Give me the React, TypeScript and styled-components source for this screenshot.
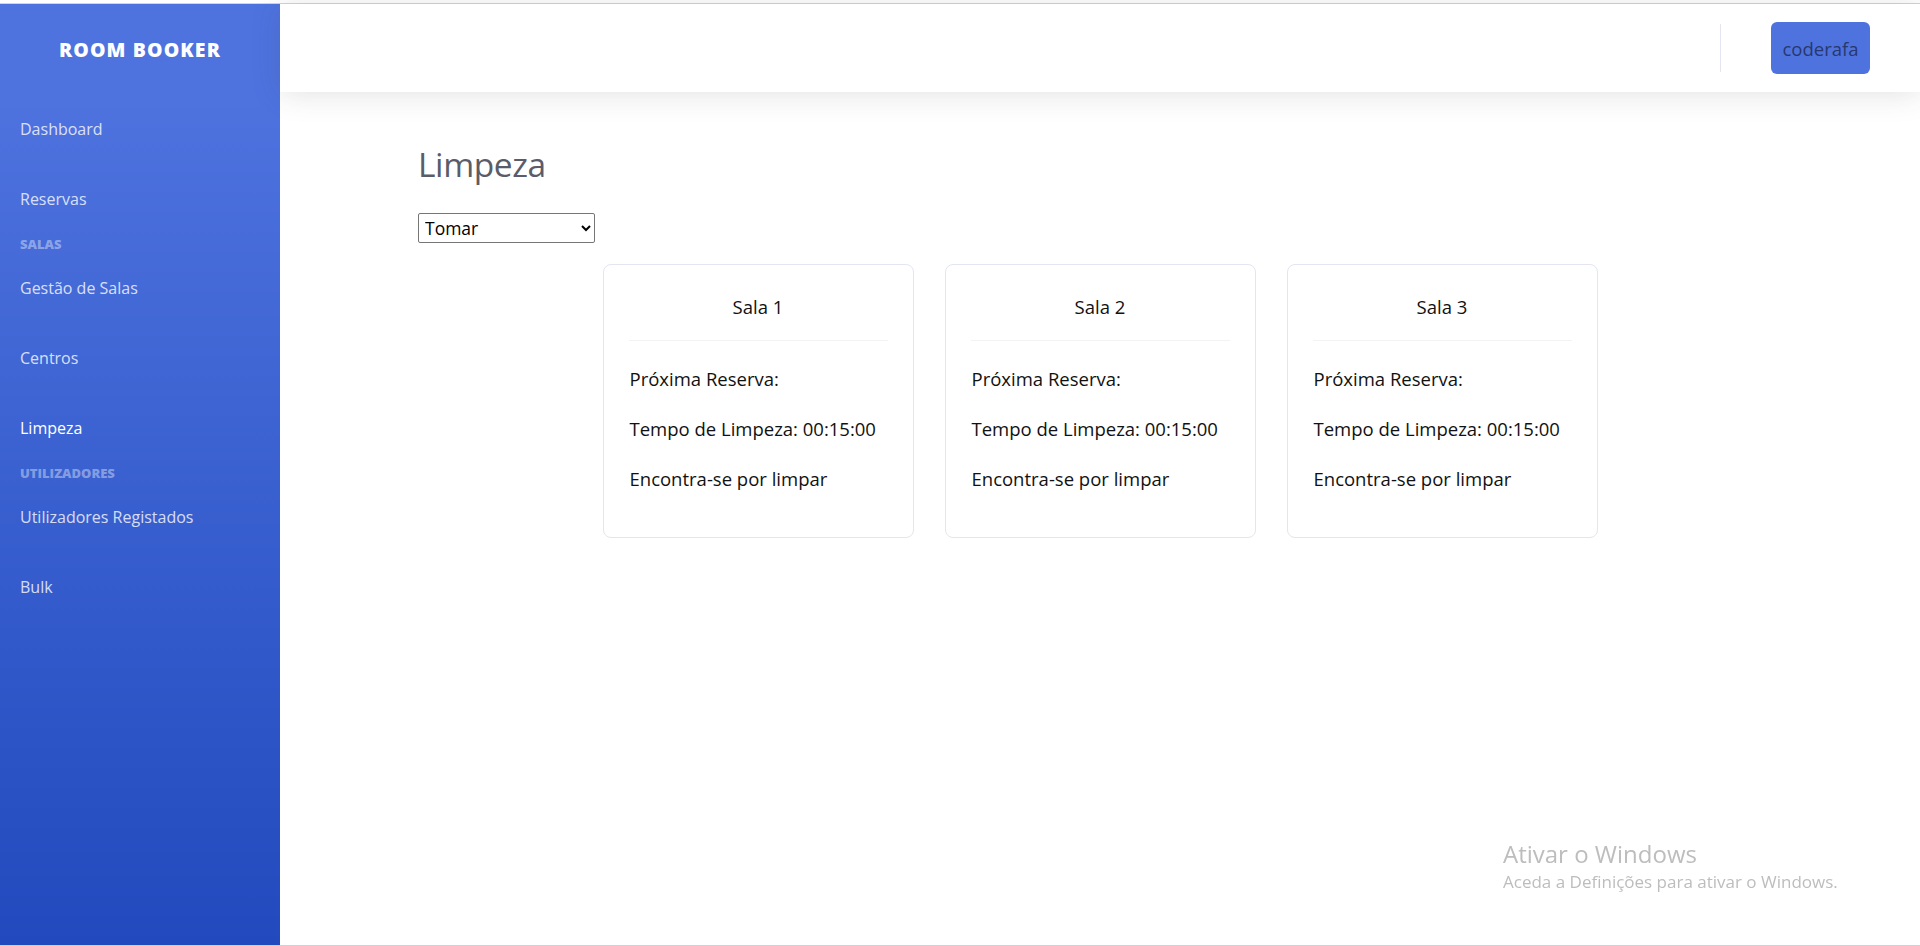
import React from "react";
import styled, { createGlobalStyle } from "styled-components";

const GlobalStyle = createGlobalStyle`
  html, body { margin: 0; padding: 0; background: #fff; }
  body { font-family: "Open Sans", "Noto Sans", sans-serif; }
  * { box-sizing: border-box; }
`;

const Frame = styled.div`
  margin-top: 3px;
  border-top: 1px solid #d4d4d4;
  border-bottom: 1px solid #d2cfd4;
  height: 943px;
  display: flex;
`;

const Sidebar = styled.nav`
  width: 280px;
  flex: 0 0 280px;
  background: linear-gradient(180deg, #4e73df 10%, #224abe 100%);
  display: flex;
  flex-direction: column;
`;

const Brand = styled.div`
  height: 90px;
  display: flex;
  align-items: center;
  justify-content: center;
  color: #fff;
  font-family: "Open Sans", sans-serif;
  font-weight: 800;
  font-size: 19.5px;
  letter-spacing: 0.07rem;
  text-transform: uppercase;
`;

const NavItem = styled.a<{ $active?: boolean }>`
  height: 70px;
  display: flex;
  align-items: center;
  padding-left: 20px;
  font-size: 16px;
  color: ${(p) => (p.$active ? "#fff" : "rgba(255,255,255,0.8)")};
  text-decoration: none;
  cursor: pointer;
`;

const NavHeading = styled.div`
  height: 19px;
  display: flex;
  align-items: center;
  padding-left: 20px;
  font-size: 13px;
  font-weight: 800;
  color: rgba(255, 255, 255, 0.4);
  text-transform: uppercase;
`;

const Main = styled.div`
  flex: 1;
  display: flex;
  flex-direction: column;
  min-width: 0;
`;

const Topbar = styled.header`
  height: 88px;
  flex: 0 0 88px;
  background: #fff;
  box-shadow: 0 0.15rem 1.75rem 0 rgba(58, 59, 69, 0.15);
  display: flex;
  align-items: center;
  justify-content: flex-end;
  padding-right: 50px;
  position: relative;
  z-index: 1;
`;

const TopDivider = styled.div`
  width: 1px;
  height: 48px;
  background: #e3e6f0;
  margin-right: 50px;
`;

const UserButton = styled.button`
  height: 52px;
  width: 99px;
  border: none;
  border-radius: 6px;
  background: #4e73df;
  color: #27386f;
  font-family: "Open Sans", sans-serif;
  font-size: 18.5px;
  padding: 0;
  cursor: pointer;
`;

const Content = styled.div`
  padding: 52px 138px 0;
  display: flex;
  flex-direction: column;
`;

const Title = styled.h1`
  margin: 0;
  font-size: 33.5px;
  line-height: 1.2;
  font-weight: 400;
  letter-spacing: -0.4px;
  color: #5a5c69;
`;

const Select = styled.select`
  margin-top: 29px;
  width: 177px;
  height: 30px;
  font-family: "Open Sans", sans-serif;
  font-size: 17.5px;
  color: #000;
  border: 1px solid #767676;
  border-radius: 2px;
  background: #fff;
  padding: 0 2px;
`;

const CardRow = styled.div`
  margin-top: 21px;
  display: flex;
  justify-content: center;
  gap: 31px;
`;

const Card = styled.div`
  width: 311px;
  height: 274px;
  border: 1px solid #e3e6f0;
  border-radius: 8px;
  background: #fff;
  display: flex;
  flex-direction: column;
`;

const CardHeader = styled.div`
  margin: 0 25px;
  padding: 29px 0 20px;
  border-bottom: 1px solid #f3f3f5;
  text-align: center;
  font-size: 18.5px;
  line-height: 26px;
  color: #111;
`;

const CardBody = styled.div`
  padding: 25px 26px 0;
  display: flex;
  flex-direction: column;
  gap: 24px;
`;

const CardLine = styled.p`
  margin: 0;
  font-size: 18.5px;
  line-height: 26px;
  color: #111;
`;

const Watermark = styled.div`
  position: fixed;
  left: 1503px;
  top: 838px;
  color: #bdbdbd;
  font-family: "Open Sans", sans-serif;
  pointer-events: none;
`;

const WatermarkTitle = styled.div`
  font-size: 24px;
  line-height: 32px;
`;

const WatermarkSub = styled.div`
  font-size: 17px;
  line-height: 24px;
`;

const rooms = ["Sala 1", "Sala 2", "Sala 3"];

export default function App() {
  return (
    <>
      <GlobalStyle />
      <Frame>
        <Sidebar>
          <Brand>Room Booker</Brand>
          <NavItem>Dashboard</NavItem>
          <NavItem>Reservas</NavItem>
          <NavHeading>Salas</NavHeading>
          <NavItem>Gestão de Salas</NavItem>
          <NavItem>Centros</NavItem>
          <NavItem $active>Limpeza</NavItem>
          <NavHeading>Utilizadores</NavHeading>
          <NavItem>Utilizadores Registados</NavItem>
          <NavItem>Bulk</NavItem>
        </Sidebar>
        <Main>
          <Topbar>
            <TopDivider />
            <UserButton>coderafa</UserButton>
          </Topbar>
          <Content>
            <Title>Limpeza</Title>
            <div>
              <Select defaultValue="Tomar">
                <option value="Tomar">Tomar</option>
              </Select>
            </div>
            <CardRow>
              {rooms.map((r) => (
                <Card key={r}>
                  <CardHeader>{r}</CardHeader>
                  <CardBody>
                    <CardLine>Próxima Reserva:</CardLine>
                    <CardLine>Tempo de Limpeza: 00:15:00</CardLine>
                    <CardLine>Encontra-se por limpar</CardLine>
                  </CardBody>
                </Card>
              ))}
            </CardRow>
          </Content>
        </Main>
      </Frame>
      <Watermark>
        <WatermarkTitle>Ativar o Windows</WatermarkTitle>
        <WatermarkSub>Aceda a Definições para ativar o Windows.</WatermarkSub>
      </Watermark>
    </>
  );
}
